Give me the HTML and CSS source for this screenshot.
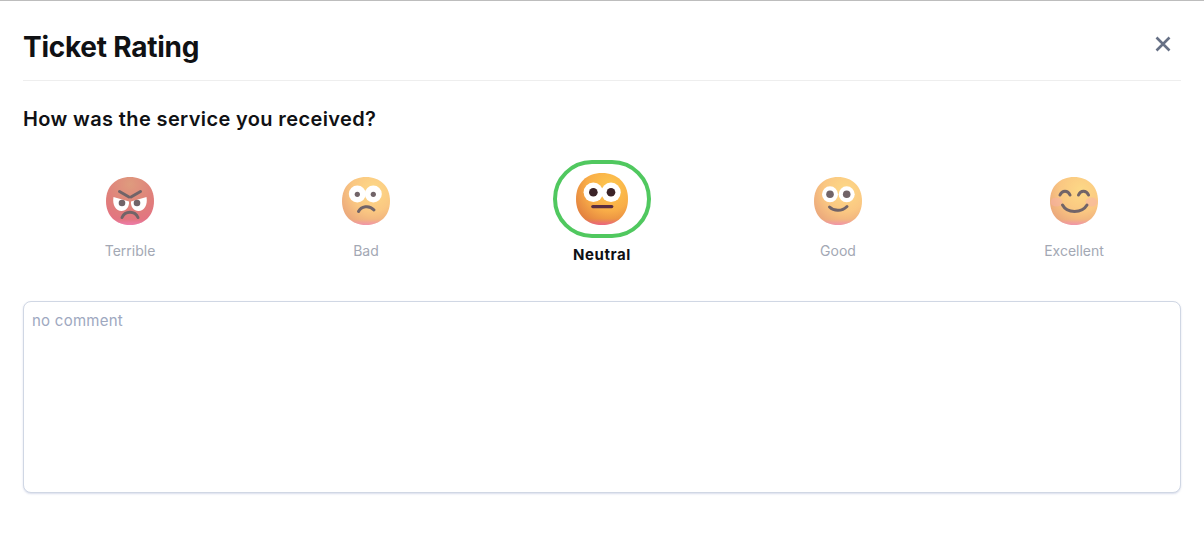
FILE: index.html
```html
<!DOCTYPE html>
<html lang="en">
<head>
<meta charset="utf-8">
<title>Ticket Rating</title>
<link rel="stylesheet" href="styles.css">
</head>
<body>
<main class="modal">
  <header class="modal-header">
    <h1 class="modal-title">Ticket Rating</h1>
    <button class="close" type="button" aria-label="Close">
      <svg width="18" height="18" viewBox="0 0 18 18"><path d="M2.500 2.500 15.500 15.500M15.500 2.500 2.500 15.500" class="close-x"/></svg>
    </button>
  </header>
  <h2 class="question">How was the service you received?</h2>
  <div class="rating">
    <div class="option dim">
      <svg class="face" viewBox="0 0 48 48">
        <defs>
          <radialGradient id="warm" cx="0.65" cy="0.28" r="0.8">
            <stop offset="0" stop-color="#fdc84e"/>
            <stop offset="0.55" stop-color="#f9ae48"/>
            <stop offset="1" stop-color="#e07c3e"/>
          </radialGradient>
          <radialGradient id="angry" cx="0.5" cy="0.15" r="0.9">
            <stop offset="0" stop-color="#cf6d42"/>
            <stop offset="0.6" stop-color="#d2433c"/>
            <stop offset="1" stop-color="#d82c4c"/>
          </radialGradient>
          <linearGradient id="blush" x1="0" y1="0.88" x2="0" y2="1">
            <stop offset="0" stop-color="#f04fb0" stop-opacity="0"/>
            <stop offset="1" stop-color="#f04fb0" stop-opacity="0.6"/>
          </linearGradient>
        </defs>
        <path class="skin-angry" d="M24 0C38 0 48 9 48 24 48 39 38 48 24 48 10 48 0 39 0 24 0 9 10 0 24 0Z"/>
        <path class="tint" d="M24 0C38 0 48 9 48 24 48 39 38 48 24 48 10 48 0 39 0 24 0 9 10 0 24 0Z"/>
        <path class="eye" d="M7.500 20 23 24.500C23.500 30 20 34 15.500 34 10 34 6 28 7.500 20ZM40.500 20 25 24.500C24.500 30 28 34 32.500 34 38 34 42 28 40.500 20Z"/>
        <circle class="pupil" cx="16" cy="26" r="3.300"/>
        <circle class="pupil" cx="31" cy="26" r="3.300"/>
        <path class="line" d="M13.500 14.500 23 20M34.500 14.500 25 20"/>
        <path class="line" d="M16 40.500C19 33.500 29 33.500 32 40.500"/>
      </svg>
      <span class="label">Terrible</span>
    </div>
    <div class="option dim">
      <svg class="face" viewBox="0 0 48 48">
        <path class="skin" d="M24 0C38 0 48 9 48 24 48 39 38 48 24 48 10 48 0 39 0 24 0 9 10 0 24 0Z"/>
        <path class="tint" d="M24 0C38 0 48 9 48 24 48 39 38 48 24 48 10 48 0 39 0 24 0 9 10 0 24 0Z"/>
        <circle class="eye" cx="15.300" cy="17" r="8.500"/>
        <circle class="eye" cx="31.300" cy="17" r="8.500"/>
        <circle class="pupil" cx="15.300" cy="17.300" r="2.600"/>
        <circle class="pupil" cx="31.300" cy="17.300" r="2.600"/>
        <path class="line" d="M16.500 34.500C19 29.500 27 27.500 32 33"/>
      </svg>
      <span class="label">Bad</span>
    </div>
    <div class="option">
      <div class="ring">
        <svg class="face face-active" viewBox="0 0 48 48">
          <path class="skin" d="M24 0C38 0 48 9 48 24 48 39 38 48 24 48 10 48 0 39 0 24 0 9 10 0 24 0Z"/>
          <path class="tint" d="M24 0C38 0 48 9 48 24 48 39 38 48 24 48 10 48 0 39 0 24 0 9 10 0 24 0Z"/>
          <circle class="eye" cx="16" cy="17.800" r="9"/>
          <circle class="eye" cx="32.300" cy="17.800" r="9"/>
          <circle class="pupil-dark" cx="16" cy="17.800" r="4"/>
          <circle class="pupil-dark" cx="32.300" cy="17.800" r="4"/>
          <path class="mouth" d="M15.500 31H33"/>
        </svg>
      </div>
      <span class="label label-active">Neutral</span>
    </div>
    <div class="option dim">
      <svg class="face" viewBox="0 0 48 48">
        <path class="skin" d="M24 0C38 0 48 9 48 24 48 39 38 48 24 48 10 48 0 39 0 24 0 9 10 0 24 0Z"/>
        <path class="tint" d="M24 0C38 0 48 9 48 24 48 39 38 48 24 48 10 48 0 39 0 24 0 9 10 0 24 0Z"/>
        <circle class="eye" cx="16" cy="17.300" r="8"/>
        <circle class="eye" cx="32.700" cy="17.300" r="8"/>
        <circle class="pupil" cx="16" cy="17.300" r="3.800"/>
        <circle class="pupil" cx="32.700" cy="17.300" r="3.800"/>
        <path class="line" d="M15.500 30C20 34.500 28 34.500 33 29.500"/>
      </svg>
      <span class="label">Good</span>
    </div>
    <div class="option dim">
      <svg class="face" viewBox="0 0 48 48">
        <path class="skin" d="M24 0C38 0 48 9 48 24 48 39 38 48 24 48 10 48 0 39 0 24 0 9 10 0 24 0Z"/>
        <path class="tint" d="M24 0C38 0 48 9 48 24 48 39 38 48 24 48 10 48 0 39 0 24 0 9 10 0 24 0Z"/>
        <ellipse class="cheek" cx="6.500" cy="25" rx="6" ry="4.500"/>
        <ellipse class="cheek" cx="41.500" cy="25" rx="6" ry="4.500"/>
        <path class="line" d="M10 18C12 13 18 13 20 18"/>
        <path class="line" d="M28.500 18C30.500 13 36.500 13 38.500 18"/>
        <path class="line" d="M12.500 28C17 36.500 32 36.500 37 28"/>
      </svg>
      <span class="label">Excellent</span>
    </div>
  </div>
  <textarea class="comment" placeholder="no comment" disabled></textarea>
</main>
</body>
</html>
```
FILE: styles.css
```css
* {
  box-sizing: border-box;
}

html,
body {
  margin: 0;
  height: 100%;
  background: #fff;
}

body {
  font-family: Inter, "Open Sans", sans-serif;
  color: #101114;
  overflow: hidden;
}

.modal {
  display: flex;
  flex-direction: column;
  height: 538px;
  padding: 0 23px;
  border-top: 1px solid #bdbdbd;
}

.modal-header {
  display: flex;
  align-items: center;
  justify-content: space-between;
  height: 80px;
  padding-top: 13px;
  border-bottom: 1px solid #eeeeee;
  flex: none;
}

.modal-title {
  margin: 0;
  font-size: 28px;
  font-weight: 700;
  line-height: 34px;
  letter-spacing: -0.25px;
}

.close {
  display: flex;
  padding: 0;
  margin-right: 9px;
  margin-top: -6px;
  border: 0;
  background: none;
}

.close-x {
  fill: none;
  stroke: #667085;
  stroke-width: 2.6;
}

.question {
  margin: 26px 0 0;
  font-size: 20px;
  font-weight: 600;
  line-height: 24px;
  letter-spacing: 0.37px;
}

.rating {
  display: grid;
  grid-template-columns: repeat(5, 214px);
  column-gap: 22px;
  margin-top: 29px;
}

.option {
  display: flex;
  flex-direction: column;
  align-items: center;
}

.face {
  display: block;
  width: 48px;
  height: 48px;
  margin-top: 17px;
}

.face-active {
  width: 52px;
  height: 52px;
  margin-top: 0;
}

.dim .face {
  opacity: 0.68;
}

.skin {
  fill: url(#warm);
}

.skin-angry {
  fill: url(#angry);
}

.tint {
  fill: url(#blush);
}

.eye {
  fill: #fff;
}

.pupil {
  fill: #2f1c22;
}

.pupil-dark {
  fill: #3b2328;
}

.line {
  fill: none;
  stroke: #2f1c22;
  stroke-width: 3;
  stroke-linecap: round;
  stroke-linejoin: round;
}

.mouth {
  fill: none;
  stroke: #5a2d40;
  stroke-width: 3;
  stroke-linecap: round;
}

.cheek {
  fill: #f58a8a;
  opacity: 0.45;
}

.ring {
  display: flex;
  align-items: center;
  justify-content: center;
  width: 98px;
  height: 78px;
  border: 4px solid #50c85f;
  border-radius: 39px;
}

.label {
  margin-top: 16px;
  font-size: 14px;
  line-height: 20px;
  color: #a3a8b4;
}

.label-active {
  margin-top: 7px;
  font-size: 15px;
  font-weight: 700;
  letter-spacing: 0.6px;
  color: #101114;
}

.comment {
  display: block;
  width: 100%;
  height: 192px;
  margin-top: 36px;
  padding: 9px 8px;
  border: 1px solid #d0d7e4;
  border-radius: 8px;
  background: #fff;
  box-shadow: 0 1px 2px rgba(170, 180, 210, 0.45);
  font-family: inherit;
  font-size: 15px;
  line-height: 20px;
  letter-spacing: 0.25px;
  resize: none;
  outline: none;
}

.comment::placeholder {
  color: #9ea8c0;
  opacity: 1;
}
```
